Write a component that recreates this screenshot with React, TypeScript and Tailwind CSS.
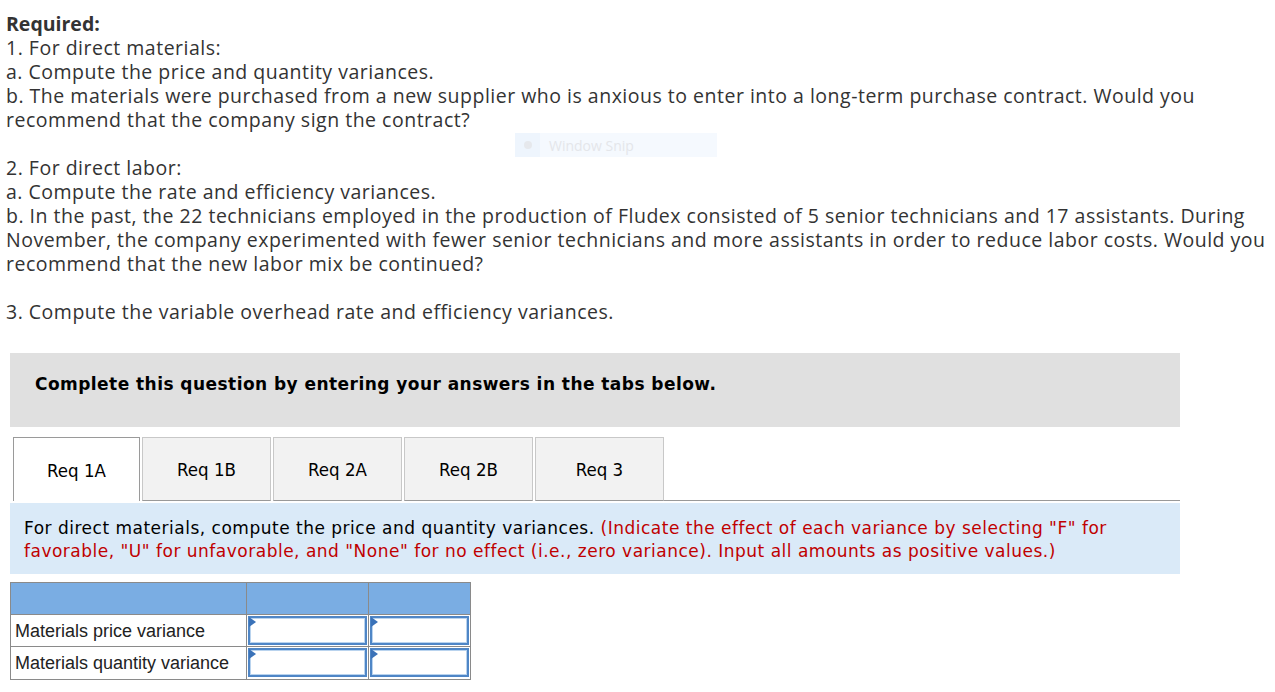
import React from "react";

const tabs = ["Req 1A", "Req 1B", "Req 2A", "Req 2B", "Req 3"];

function InputCell() {
  return (
    <td className="border border-[#8a8a8a] p-0 h-[32px]">
      <div className="relative h-full w-full p-[1px]">
        <div className="h-[29px] w-full border-2 border-[#4f86c6] bg-white shadow-[inset_0_0_0_1px_#b9d3ee]" />
        <span className="absolute z-10 left-[2px] top-[2px] w-0 h-0 border-y-[5px] border-y-transparent border-l-[7px] border-l-[#3a72b8]" />
      </div>
    </td>
  );
}

export default function App() {
  return (
    <div className="relative w-[1275px] h-[692px] bg-white overflow-hidden">
      <div className="pl-[6px] pt-[12px] text-[19.5px] tracking-[0.5px] leading-[24px] text-[#333] whitespace-nowrap font-['Open_Sans',sans-serif]">
        <p className="font-bold tracking-normal">Required:</p>
        <p>1. For direct materials:</p>
        <p>a. Compute the price and quantity variances.</p>
        <p>b. The materials were purchased from a new supplier who is anxious to enter into a long-term purchase contract. Would you</p>
        <p>recommend that the company sign the contract?</p>
        <p className="h-[24px]" />
        <p>2. For direct labor:</p>
        <p>a. Compute the rate and efficiency variances.</p>
        <p>b. In the past, the 22 technicians employed in the production of Fludex consisted of 5 senior technicians and 17 assistants. During</p>
        <p>November, the company experimented with fewer senior technicians and more assistants in order to reduce labor costs. Would you</p>
        <p>recommend that the new labor mix be continued?</p>
        <p className="h-[24px]" />
        <p>3. Compute the variable overhead rate and efficiency variances.</p>
      </div>

      <div className="absolute left-[515px] top-[133px] w-[202px] h-[24px] flex items-center bg-[#f5f9fe] text-[14px] text-[#e4e6ea] font-['Open_Sans',sans-serif]">
        <span className="w-[25px] h-full bg-[#eef5fd] flex items-center justify-center">
          <span className="w-[8px] h-[8px] rounded-full bg-[#e6e8ec]" />
        </span>
        <span className="ml-[9px]">Window Snip</span>
      </div>

      <div className="ml-[10px] mt-[29px] w-[1170px]">
        <div className="h-[74px] bg-[#e0e0e0] pl-[25px] pt-[21px] leading-[20px] font-['DejaVu_Sans',sans-serif] font-bold text-[17px] tracking-[0.45px] text-black">
          Complete this question by entering your answers in the tabs below.
        </div>

        <div className="mt-[10px] flex items-end h-[64px] font-['DejaVu_Sans_Condensed','DejaVu_Sans',sans-serif] text-[18.5px] text-black">
          <div className="w-[3px] h-full" />
          {tabs.map((t, i) =>
            i === 0 ? (
              <div key={t} className="w-[127px] h-full bg-white border border-b-0 border-[#9a9a9a] flex items-center justify-center pt-[2px]">
                {t}
              </div>
            ) : (
              <div key={t} className="w-[129px] h-full ml-[2px] bg-[#f2f2f2] border border-[#c8c8c8] border-b-[#999] flex items-center justify-center pt-[2px]">
                {t}
              </div>
            )
          )}
          <div className="flex-1 border-b border-[#999]" />
        </div>

        <div className="mt-[2px] h-[71px] bg-[#daeaf8] pl-[14px] pt-[14px] text-[17px] tracking-[0.5px] leading-[23px] text-black whitespace-nowrap font-['DejaVu_Sans',sans-serif]">
          <p>
            For direct materials, compute the price and quantity variances.{" "}
            <span className="text-[#c00000]">(Indicate the effect of each variance by selecting "F" for</span>
          </p>
          <p className="text-[#c00000]">
            favorable, "U" for unfavorable, and "None" for no effect (i.e., zero variance). Input all amounts as positive values.)
          </p>
        </div>

        <table className="mt-[8px] border-collapse font-['Liberation_Sans',Arial,sans-serif] text-[18px] text-[#222]">
          <tbody>
            <tr className="h-[32px] bg-[#7aade3]">
              <td className="w-[236px] border border-[#8a8a8a]" />
              <td className="w-[122px] border border-[#8a8a8a]" />
              <td className="w-[102px] border border-[#8a8a8a]" />
            </tr>
            <tr className="h-[32px]">
              <td className="border border-[#8a8a8a] pl-[4px] leading-[20px]">Materials price variance</td>
              <InputCell />
              <InputCell />
            </tr>
            <tr className="h-[33px]">
              <td className="border border-[#8a8a8a] pl-[4px] leading-[20px]">Materials quantity variance</td>
              <InputCell />
              <InputCell />
            </tr>
          </tbody>
        </table>
      </div>
    </div>
  );
}
